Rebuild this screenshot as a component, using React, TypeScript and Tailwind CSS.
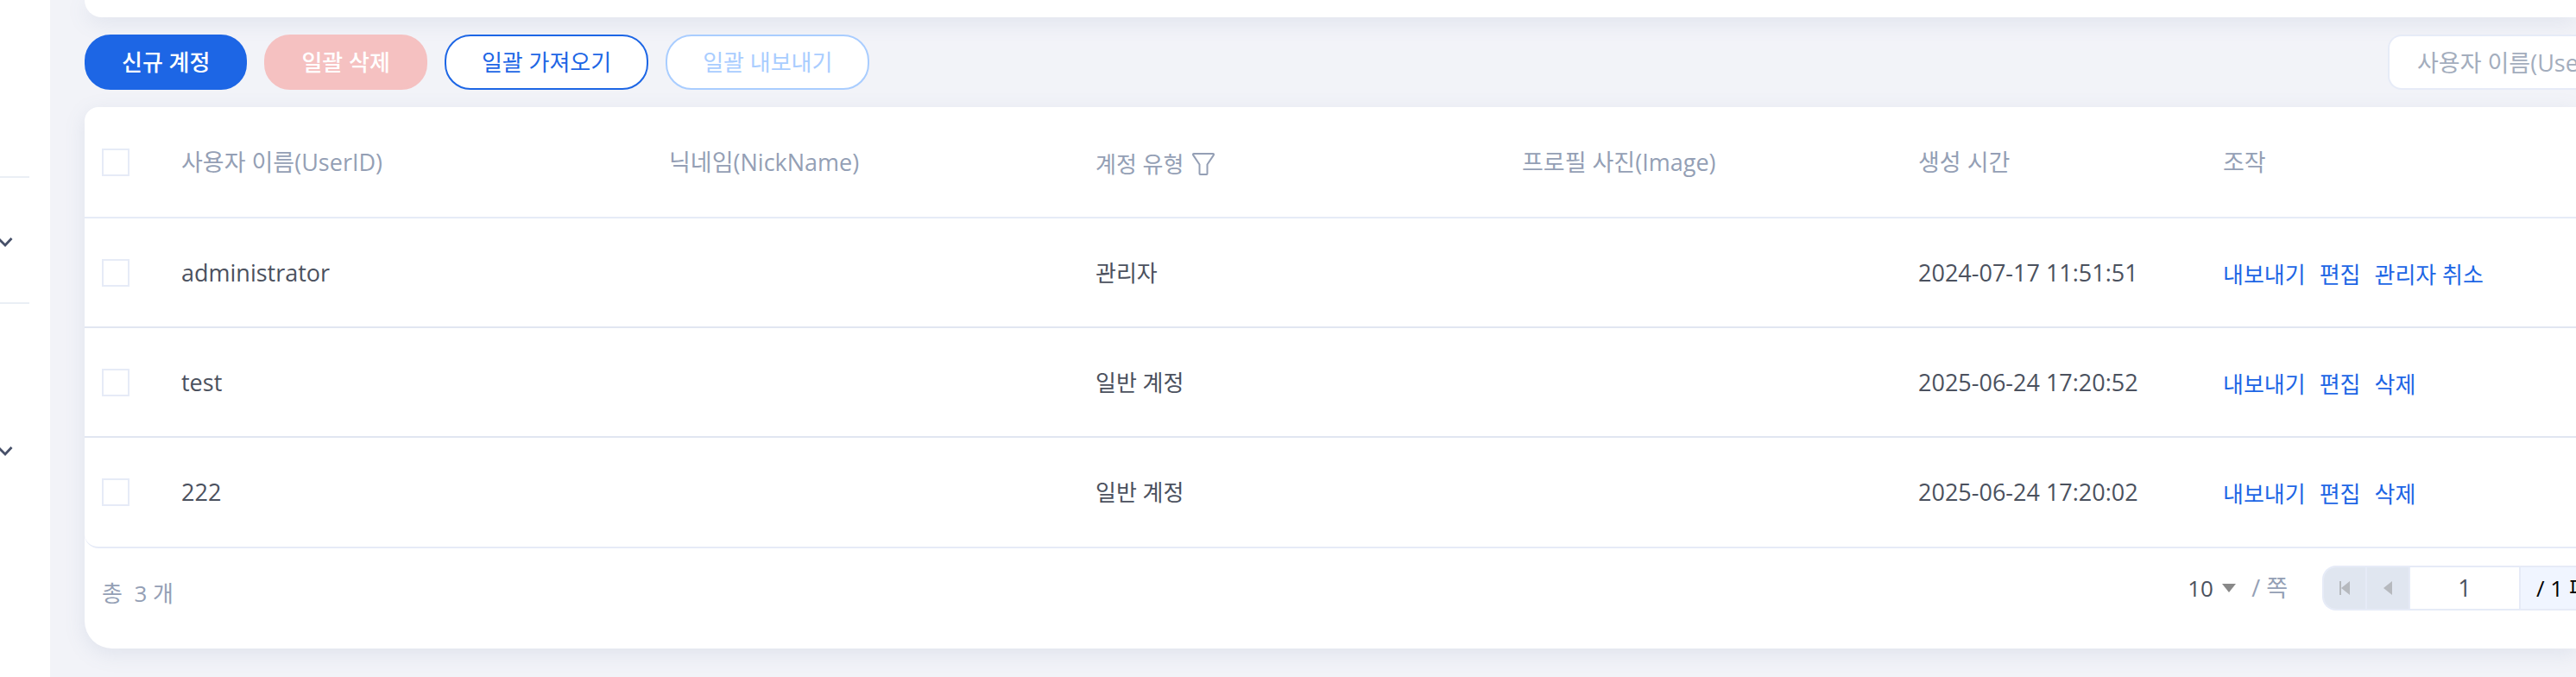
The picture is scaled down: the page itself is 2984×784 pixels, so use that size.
import { useState } from 'react';
import { clsx } from 'clsx';

interface Account {
  userId: string;
  nickName?: string;
  type: string;
  createdAt: string;
  actions: string[];
}

const accounts: Account[] = [
  {
    userId: 'administrator',
    type: '관리자',
    createdAt: '2024-07-17 11:51:51',
    actions: ['내보내기', '편집', '관리자 취소'],
  },
  {
    userId: 'test',
    type: '일반 계정',
    createdAt: '2025-06-24 17:20:52',
    actions: ['내보내기', '편집', '삭제'],
  },
  {
    userId: '222',
    type: '일반 계정',
    createdAt: '2025-06-24 17:20:02',
    actions: ['내보내기', '편집', '삭제'],
  },
];

const cardShadow = 'shadow-[0_6px_24px_rgba(100,125,160,0.13)]';

function MenuChevron() {
  return (
    <svg className="block h-3 w-4" viewBox="0 0 16 12" fill="none">
      <path d="M-2 2l8 8 7.500-8" stroke="#475069" strokeWidth="2.800" />
    </svg>
  );
}

function FilterIcon() {
  return (
    <svg className="h-[26px] w-[26px]" viewBox="0 0 26 26" fill="none">
      <path
        d="M2 1h22q1.500 0 .8 1.600L17.500 13.500V24q0 1-1 1h-7q-1 0-1-1V13.500L1.200 2.600Q.5 1 2 1z"
        stroke="currentColor"
        strokeWidth="2"
        strokeLinejoin="round"
      />
    </svg>
  );
}

function Sidebar() {
  return (
    <aside className="w-[58px] shrink-0 bg-white">
      <div className="mr-6 h-[206px] border-b-2 border-[#eaeff5]" />
      <div className="mr-6 flex h-[146px] items-center border-b-2 border-[#eaeff5] pt-1">
        <button type="button" aria-label="메뉴 펼치기">
          <MenuChevron />
        </button>
      </div>
      <button type="button" aria-label="메뉴 펼치기" className="mt-[164px] block">
        <MenuChevron />
      </button>
    </aside>
  );
}

interface ToolbarButtonProps {
  label: string;
  disabled?: boolean;
  className: string;
}

function ToolbarButton({ label, disabled, className }: ToolbarButtonProps) {
  return (
    <button
      type="button"
      disabled={disabled}
      className={clsx('h-16 rounded-[30px] border-2 px-[41px] whitespace-nowrap', className)}
    >
      {label}
    </button>
  );
}

function Toolbar() {
  return (
    <div className="flex items-center gap-5 py-5">
      <ToolbarButton label="신규 계정" className="border-[#1d66e5] bg-[#1d66e5] font-medium text-white" />
      <ToolbarButton label="일괄 삭제" disabled className="border-[#f5c1c1] bg-[#f5c1c1] font-medium text-white" />
      <ToolbarButton label="일괄 가져오기" className="border-[#1d66e5] bg-white text-[#1d66e5]" />
      <ToolbarButton label="일괄 내보내기" disabled className="border-[#a9cdff] bg-white text-[#a9cdff]" />
      <input
        type="text"
        aria-label="사용자 이름 검색"
        placeholder="사용자 이름(UserID)"
        className="ml-auto h-16 w-[218px] rounded-l-2xl border-2 border-r-0 border-[#e6ebf7] bg-white pl-8 text-[27px] placeholder:text-[#a3adbd] focus:outline-none"
      />
    </div>
  );
}

interface CheckProps {
  label: string;
  checked: boolean;
  onChange: () => void;
}

function Check({ label, checked, onChange }: CheckProps) {
  return (
    <input
      type="checkbox"
      aria-label={label}
      checked={checked}
      onChange={onChange}
      className="block size-8 appearance-none border-2 border-[#e6ebf7] bg-white checked:bg-[#1d66e5]"
    />
  );
}

function AccountTable() {
  const [selected, setSelected] = useState<string[]>([]);
  const allSelected = selected.length === accounts.length;

  const toggle = (id: string) =>
    setSelected((prev) => (prev.includes(id) ? prev.filter((x) => x !== id) : [...prev, id]));

  return (
    <div className="overflow-hidden rounded-bl-2xl border-b-2 border-[#e6ebf7]">
      <table className="w-full table-fixed text-left text-[27px]">
        <colgroup>
          <col className="w-[92px]" />
          <col className="w-[565px]" />
          <col className="w-[494px]" />
          <col className="w-[494px]" />
          <col className="w-[459px]" />
          <col className="w-[353px]" />
          <col />
        </colgroup>
        <thead>
          <tr className="h-[128px] border-b-2 border-[#e6ebf7] text-[#949fb5] *:px-5 *:font-normal">
            <th>
              <Check
                label="전체 선택"
                checked={allSelected}
                onChange={() => setSelected(allSelected ? [] : accounts.map((a) => a.userId))}
              />
            </th>
            <th>사용자 이름(UserID)</th>
            <th>닉네임(NickName)</th>
            <th>
              <div className="flex items-center gap-[10px] pt-1 text-[26px]">
                계정 유형
                <button type="button" aria-label="계정 유형 필터">
                  <FilterIcon />
                </button>
              </div>
            </th>
            <th>프로필 사진(Image)</th>
            <th>생성 시간</th>
            <th>조작</th>
          </tr>
        </thead>
        <tbody className="text-[#4b515e]">
          {accounts.map((account) => (
            <tr
              key={account.userId}
              className="h-[127px] border-b-2 border-[#e1e6f1] *:px-5 last:border-b-0"
            >
              <td>
                <Check
                  label={`${account.userId} 선택`}
                  checked={selected.includes(account.userId)}
                  onChange={() => toggle(account.userId)}
                />
              </td>
              <td>{account.userId}</td>
              <td>{account.nickName}</td>
              <td className="text-[26px]">{account.type}</td>
              <td />
              <td>{account.createdAt}</td>
              <td>
                <div className="flex gap-4 pt-1 text-[26px] text-[#1d66e5]">
                  {account.actions.map((action) => (
                    <a key={action} href="#">
                      {action}
                    </a>
                  ))}
                </div>
              </td>
            </tr>
          ))}
        </tbody>
      </table>
    </div>
  );
}

function Pagination() {
  return (
    <div className="flex h-[52px] items-center text-[27px] text-[#949fb5]">
      <label className="flex items-center">
        <select aria-label="쪽당 개수" className="w-10 appearance-none text-[26px] text-[#4b515e]">
          <option>10</option>
        </select>
        <svg className="h-[10px] w-4" viewBox="0 0 16 10">
          <path d="M0 0h16L8 10z" fill="#888" />
        </svg>
        <span className="ml-[18px]">/ 쪽</span>
      </label>
      <div className="ml-10 flex h-full w-[294px] overflow-hidden rounded-l-2xl border-2 border-r-0 border-[#e6ebf7] bg-[#f0f5ff]">
        <button
          type="button"
          disabled
          aria-label="첫 페이지"
          className="flex w-[50px] shrink-0 items-center justify-center border-r-2 border-[#e6ebf7] bg-[#e0e6f0]"
        >
          <svg className="h-4 w-3" viewBox="0 0 12 16" fill="#b6b9be">
            <path d="M0 0h2v16H0zM12 0v16L2 8z" />
          </svg>
        </button>
        <button
          type="button"
          disabled
          aria-label="이전 페이지"
          className="flex w-[50px] shrink-0 items-center justify-center border-r-2 border-[#e6ebf7] bg-[#e0e6f0]"
        >
          <svg className="h-4 w-[10px]" viewBox="0 0 10 16" fill="#b6b9be">
            <path d="M10 0v16L0 8z" />
          </svg>
        </button>
        <input
          type="text"
          aria-label="페이지 번호"
          defaultValue="1"
          className="w-32 shrink-0 border-r-2 border-[#e6ebf7] bg-white text-center text-[#4b515e] focus:outline-none"
        />
        <span className="pl-[18px] text-[26px] leading-[48px] whitespace-nowrap text-black">/ 1 페이지</span>
      </div>
    </div>
  );
}

export default function App() {
  return (
    <div className="flex min-h-screen overflow-hidden bg-[#f2f3f8] font-['Open_Sans','Noto_Sans_CJK_KR',sans-serif] text-[26px] leading-9">
      <Sidebar />
      <main className="min-w-0 flex-1 pb-8 pl-10">
        <div className={clsx('h-5 rounded-bl-[32px] bg-white', cardShadow)} />
        <Toolbar />
        <section className={clsx('rounded-tl-2xl rounded-bl-[32px] bg-white', cardShadow)}>
          <AccountTable />
          <div className="flex items-start justify-between pt-5 pb-8 pl-5">
            <p className="leading-[64px] text-[#949fb5]">총&nbsp; 3 개</p>
            <Pagination />
          </div>
        </section>
      </main>
    </div>
  );
}
